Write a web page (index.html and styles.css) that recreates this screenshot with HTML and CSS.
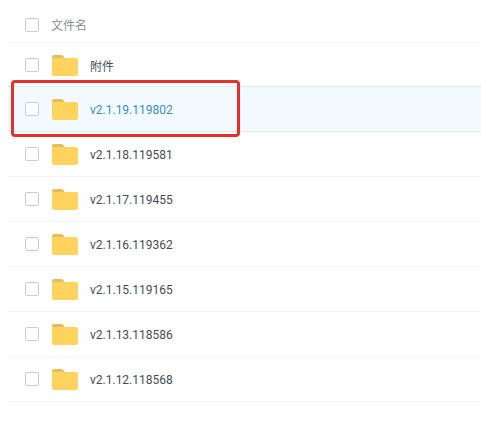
FILE: index.html
```html
<!DOCTYPE html>
<html lang="zh">
<head>
<meta charset="utf-8">
<title>文件</title>
<link rel="stylesheet" href="styles.css">
</head>
<body>
<svg class="defs" width="0" height="0" aria-hidden="true">
  <symbol id="folder" viewBox="0 0 26 21">
    <path d="M0 2A2 2 0 0 1 2 0h7.5a2 2 0 0 1 1.6.8L13 3.5H0z" fill="#e5bd5c"/>
    <path d="M0 4a1 1 0 0 1 1-1h23a2 2 0 0 1 2 2V19a2 2 0 0 1-2 2H2a2 2 0 0 1-2-2z" fill="#ffd45e"/>
  </symbol>
</svg>
<div class="list">
  <div class="row head"><span class="check"></span><span class="title">文件名</span></div>
  <div class="row first"><span class="check"></span><svg class="folder"><use href="#folder"/></svg><span class="name">附件</span></div>
  <div class="row active"><span class="check"></span><svg class="folder"><use href="#folder"/></svg><span class="name">v2.1.19.119802</span><div class="marker"></div></div>
  <div class="row"><span class="check"></span><svg class="folder"><use href="#folder"/></svg><span class="name">v2.1.18.119581</span></div>
  <div class="row"><span class="check"></span><svg class="folder"><use href="#folder"/></svg><span class="name">v2.1.17.119455</span></div>
  <div class="row"><span class="check"></span><svg class="folder"><use href="#folder"/></svg><span class="name">v2.1.16.119362</span></div>
  <div class="row"><span class="check"></span><svg class="folder"><use href="#folder"/></svg><span class="name">v2.1.15.119165</span></div>
  <div class="row"><span class="check"></span><svg class="folder"><use href="#folder"/></svg><span class="name">v2.1.13.118586</span></div>
  <div class="row"><span class="check"></span><svg class="folder"><use href="#folder"/></svg><span class="name">v2.1.12.118568</span></div>
</div>
</body>
</html>
```
FILE: styles.css
```css
html, body {
  margin: 0;
  padding: 0;
  background: #fff;
}
body {
  width: 481px;
  height: 427px;
  overflow: hidden;
  font-family: Roboto, "Noto Sans CJK SC", sans-serif;
  font-size: 12px;
  color: #454d5a;
}
.defs {
  position: absolute;
}
.list {
  margin-left: 8px;
  display: flex;
  flex-direction: column;
}
.row {
  position: relative;
  box-sizing: border-box;
  height: 45px;
  display: flex;
  align-items: center;
  padding-left: 17px;
  border-bottom: 1px solid #f2f3f5;
}
.head {
  height: 43px;
  padding-top: 7px;
}
.first {
  height: 44px;
  border-bottom-color: #dfe8ee;
}
.active {
  background: #f2faff;
  border-bottom-color: #dfe8ee;
  color: #3a8fb7;
}
.check {
  box-sizing: border-box;
  flex: none;
  width: 14px;
  height: 14px;
  border: 1px solid #c8ccd1;
  border-radius: 2px;
  background: #fff;
}
.title {
  margin-left: 12px;
  color: #8a8f96;
}
.folder {
  flex: none;
  width: 26px;
  height: 21px;
  margin: 1px 0 0 13px;
}
.name {
  margin-left: 12px;
  padding-top: 2px;
}
.marker {
  position: absolute;
  left: 3px;
  top: -7px;
  width: 229px;
  height: 57px;
  box-sizing: border-box;
  border: 3px solid #e2322e;
  border-radius: 4px;
}
```
